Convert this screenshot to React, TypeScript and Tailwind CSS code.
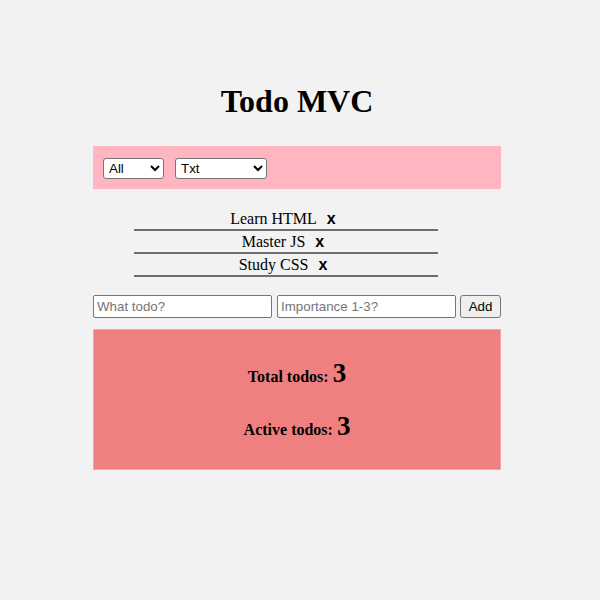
import { useState } from "react";

type Todo = { id: number; text: string; importance: number; done: boolean };

const initial: Todo[] = [
  { id: 1, text: "Learn HTML", importance: 1, done: false },
  { id: 2, text: "Master JS", importance: 2, done: false },
  { id: 3, text: "Study CSS", importance: 3, done: false },
];

export default function App() {
  const [todos, setTodos] = useState<Todo[]>(initial);
  const [text, setText] = useState("");
  const [importance, setImportance] = useState("");
  const [filter, setFilter] = useState("All");
  const [sort, setSort] = useState("Txt");

  const addTodo = () => {
    if (!text.trim()) return;
    setTodos([
      ...todos,
      { id: Date.now(), text, importance: Number(importance) || 1, done: false },
    ]);
    setText("");
    setImportance("");
  };

  const active = todos.filter((t) => !t.done).length;

  return (
    <div className="min-h-screen w-full bg-[#f2f2f2] font-['Liberation_Serif',serif] text-black">
      <div className="ml-[93px] w-[408px] pt-[81px]">
        {/* title */}
        <h1 className="text-center text-[32px] font-bold leading-[40px]">Todo MVC</h1>

        {/* filter bar */}
        <div className="mt-[25px] flex h-[43px] items-center gap-[11px] bg-[#ffb6c1] pl-[10px] pt-[1px] font-['Liberation_Sans',sans-serif] text-[13.33px]">
          <select
            value={filter}
            onChange={(e) => setFilter(e.target.value)}
            className="h-[21px] w-[61px] rounded-[3px] border border-[#767676] bg-white pl-[1px]"
          >
            <option>All</option>
            <option>Active</option>
            <option>Done</option>
          </select>
          <select
            value={sort}
            onChange={(e) => setSort(e.target.value)}
            className="h-[21px] w-[92px] rounded-[3px] border border-[#767676] bg-white pl-[1px]"
          >
            <option>Txt</option>
            <option>Importance</option>
          </select>
        </div>

        {/* list */}
        <ul className="ml-[41px] mt-[19px] w-[304px]">
          {todos.map((t) => (
            <li
              key={t.id}
              className="flex h-[23px] items-center justify-center gap-[10px] border-b-2 border-[#6e6e6e] pr-[6px] text-[16px] leading-[21px]"
            >
              <span className={t.done ? "line-through" : ""}>{t.text}</span>
              <button
                onClick={() => setTodos(todos.filter((x) => x.id !== t.id))}
                className="font-['Liberation_Sans',sans-serif] text-[16px] font-bold leading-none"
              >
                x
              </button>
            </li>
          ))}
        </ul>

        {/* add form */}
        <div className="mt-[18px] flex items-center font-['Liberation_Sans',sans-serif] text-[13.33px]">
          <input
            value={text}
            onChange={(e) => setText(e.target.value)}
            placeholder="What todo?"
            className="h-[23px] w-[179px] rounded-[2px] border border-[#767676] bg-white px-[3px] placeholder:text-[#757575]"
          />
          <input
            value={importance}
            onChange={(e) => setImportance(e.target.value)}
            placeholder="Importance 1-3?"
            className="ml-[5px] h-[23px] w-[179px] rounded-[2px] border border-[#767676] bg-white px-[3px] placeholder:text-[#757575]"
          />
          <button
            onClick={addTodo}
            className="ml-[4px] h-[23px] w-[41px] rounded-[3px] border border-[#767676] bg-[#efefef] text-black"
          >
            Add
          </button>
        </div>

        {/* stats */}
        <div className="mt-[11px] flex h-[141px] flex-col items-center border border-[#f4a8a8] bg-[#f08080] pt-[27px] font-bold">
          <p className="text-[16px] leading-[32px]">
            Total todos: <span className="text-[27px]">{todos.length}</span>
          </p>
          <p className="mt-[17px] text-[16px] leading-[32px]">
            Active todos: <span className="text-[27px]">{active}</span>
          </p>
        </div>
      </div>
    </div>
  );
}
